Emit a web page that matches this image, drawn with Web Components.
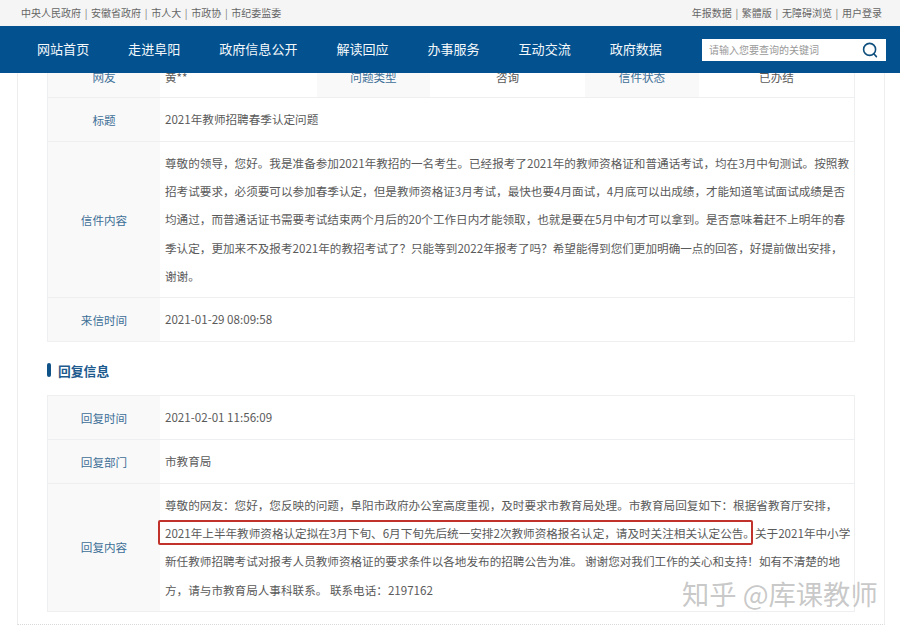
<!DOCTYPE html>
<html lang="zh-CN">
<head>
<meta charset="utf-8">
<title>回复信息</title>
<style>
  html, body { margin: 0; background: #fff; }
  body { font-family: "Noto Sans CJK SC", "Noto Sans", sans-serif; }
  .mark {
    border: 2px solid #c0322b;
    border-radius: 2px;
    padding: 2.5px 0 2.5px 5px;
    margin: 0 2px 0 -7px;
  }
  /* full stop sits inside the red box, box edge cuts its empty half */
  .mark b { font-weight: 400; letter-spacing: -4px; }
</style>
</head>
<body>
<gov-page>
  <top-links slot="top">
    <span>中央人民政府</span><span>安徽省政府</span><span>市人大</span><span>市政协</span><span class="end">市纪委监委</span>
    <span slot="right">年报数据</span><span slot="right">繁體版</span><span slot="right">无障碍浏览</span><span slot="right" class="end">用户登录</span>
  </top-links>
  <main-nav slot="top">
    <span>网站首页</span><span>走进阜阳</span><span>政府信息公开</span><span>解读回应</span><span>办事服务</span><span>互动交流</span><span>政府数据</span>
  </main-nav>

  <info-table>
    <info-row-multi cells="网友,黄**,问题类型,咨询,信件状态,已办结"></info-row-multi>
    <info-row label="标题">2021年教师招聘春季认定问题</info-row>
    <info-row label="信件内容">尊敬的领导&#xFF0C;您好。我是准备参加2021年教招的一名考生。已经报考了2021年的教师资格证和普通话考试&#xFF0C;均在3月中旬测试。按照教<br>招考试要求&#xFF0C;必须要可以参加春季认定&#xFF0C;但是教师资格证3月考试&#xFF0C;最快也要4月面试&#xFF0C;4月底可以出成绩&#xFF0C;才能知道笔试面试成绩是否<br>均通过&#xFF0C;而普通话证书需要考试结束两个月后的20个工作日内才能领取&#xFF0C;也就是要在5月中旬才可以拿到。是否意味着赶不上明年的春<br>季认定&#xFF0C;更加来不及报考2021年的教招考试了&#xFF1F;只能等到2022年报考了吗&#xFF1F;希望能得到您们更加明确一点的回答&#xFF0C;好提前做出安排&#xFF0C;<br>谢谢。</info-row>
    <info-row label="来信时间">2021-01-29 08:09:58</info-row>
  </info-table>

  <section-title>回复信息</section-title>

  <info-table>
    <info-row label="回复时间">2021-02-01 11:56:09</info-row>
    <info-row label="回复部门">市教育局</info-row>
    <info-row label="回复内容">尊敬的网友&#xFF1A;您好&#xFF0C;您反映的问题&#xFF0C;阜阳市政府办公室高度重视&#xFF0C;及时要求市教育局处理。市教育局回复如下&#xFF1A;根据省教育厅安排&#xFF0C;<br><span class="mark">2021年上半年教师资格认定拟在3月下旬、6月下旬先后统一安排2次教师资格报名认定&#xFF0C;请及时关注相关认定公告<b>。</b></span>关于2021年中小学<br>新任教师招聘考试对报考人员教师资格证的要求条件以各地发布的招聘公告为准。 谢谢您对我们工作的关心和支持&#xFF01;如有不清楚的地<br>方&#xFF0C;请与市教育局人事科联系。 联系电话&#xFF1A;2197162</info-row>
  </info-table>

  <water-mark slot="over">知乎 @库课教师</water-mark>
</gov-page>

<script>
(function () {
    function define(name, html, setup) {
        customElements.define(name, class extends HTMLElement {
            constructor() {
                super();
                this.attachShadow({mode: "open"}).innerHTML = html;
                if (setup) setup(this);
            }
        });
    }

    // whole window: fixed header, then the scrolled content clipped under it
    define('gov-page', `
    <style>
      :host { display: flex; flex-direction: column; width: 900px; height: 630px; overflow: hidden; position: relative; background: #fff; }
      .head { flex: none; position: relative; z-index: 2; }
      .view { flex: 1; min-height: 0; overflow: hidden; }
      .panel {
        margin: -16px 15px 0 17px;
        padding: 0 29px 12px 29px;
        border-left: 1px solid #eeeeee;
        border-right: 1px solid #eeeeee;
        border-bottom: 1px dotted #d9d9d9;
      }
    </style>
    <div class="head"><slot name="top"></slot></div>
    <div class="view"><div class="panel"><slot></slot></div></div>
    <slot name="over"></slot>`);

    define('top-links', `
    <style>
      :host { display: flex; justify-content: space-between; height: 26px; padding: 0 18px 0 21px; background: #f5f5f5; color: #666; font-size: 10px; line-height: 25px; }
      .links { display: flex; }
      ::slotted(span:not(.end))::after { content: "|"; margin: 0 3.7px; color: #777; }
    </style>
    <div class="links"><slot></slot></div>
    <div class="links"><slot name="right"></slot></div>`);

    define('main-nav', `
    <style>
      :host { display: flex; align-items: center; height: 47px; padding: 0 14px 2px 37px; box-sizing: border-box; background: #03518f; color: #f4f8fb; font-size: 13.05px; }
      .items { display: flex; gap: 38.9px; flex: 1; }
      .search { display: flex; align-items: center; justify-content: space-between; box-sizing: border-box; width: 184px; height: 22px; margin-bottom: -2px; padding: 0 8px 0 7px; background: #fff; color: #999; font-size: 10px; }
      svg { display: block; }
    </style>
    <div class="items"><slot></slot></div>
    <div class="search">
      <span>请输入您要查询的关键词</span>
      <svg width="16" height="16" viewBox="0 0 16 16" fill="none" stroke="#0f4f7d" stroke-width="1.6" stroke-linecap="round">
        <circle cx="7.6" cy="7.4" r="6"/><path d="M11.8 11.8l2.6 2.8"/>
      </svg>
    </div>`);

    define('info-table', `
    <style>
      :host { display: block; border: 1px solid #eeeff0; border-bottom: 0; }
    </style>
    <slot></slot>`);

    define('info-row', `
    <style>
      :host { display: grid; grid-template-columns: 112px 1fr; min-height: 43px; border-bottom: 1px solid #eeeff0; font-size: 11.6px; }
      .label { display: flex; align-items: center; justify-content: center; background: #f9f9f9; color: #3d6f97; }
      .value { align-self: center; padding: 6.5px 0 6.5px 5px; color: #5a5a5a; line-height: 28.4px; white-space: nowrap; }
    </style>
    <div class="label"></div>
    <div class="value"><slot></slot></div>`, function (el) {
        el.shadowRoot.querySelector('.label').textContent = el.getAttribute('label');
    });

    // first row: three label and value pairs side by side
    define('info-row-multi', `
    <style>
      :host { display: grid; grid-template-columns: 112px 157px 113px 155px 114px 1fr; height: 39px; border-bottom: 1px solid #eeeff0; font-size: 11.6px; line-height: 39px; text-align: center; color: #5a5a5a; }
      div:nth-of-type(odd) { background: #f9f9f9; color: #3d6f97; }
      div:nth-of-type(2) { text-align: left; padding-left: 5px; }
    </style>
    <div></div><div></div><div></div><div></div><div></div><div></div>`, function (el) {
        const cells = el.getAttribute('cells').split(',');
        el.shadowRoot.querySelectorAll('div').forEach((d, i) => { d.textContent = cells[i]; });
    });

    define('section-title', `
    <style>
      :host { display: flex; align-items: center; gap: 7px; height: 24px; padding: 16px 0 13px; color: #1d5a8e; font-size: 12.8px; font-weight: 700; }
      i { width: 4px; height: 14px; border-radius: 2px; background: #0f5288; }
    </style>
    <i></i><span><slot></slot></span>`);

    // picture credit lying over the content
    define('water-mark', `
    <style>
      :host { position: absolute; left: 682px; top: 575px; z-index: 3; color: rgba(170, 170, 170, .65); font-size: 27.3px; line-height: 36px; white-space: nowrap; text-shadow: 0 0 2px rgba(255, 255, 255, .8); }
    </style>
    <slot></slot>`);
})();
</script>
</body>
</html>
